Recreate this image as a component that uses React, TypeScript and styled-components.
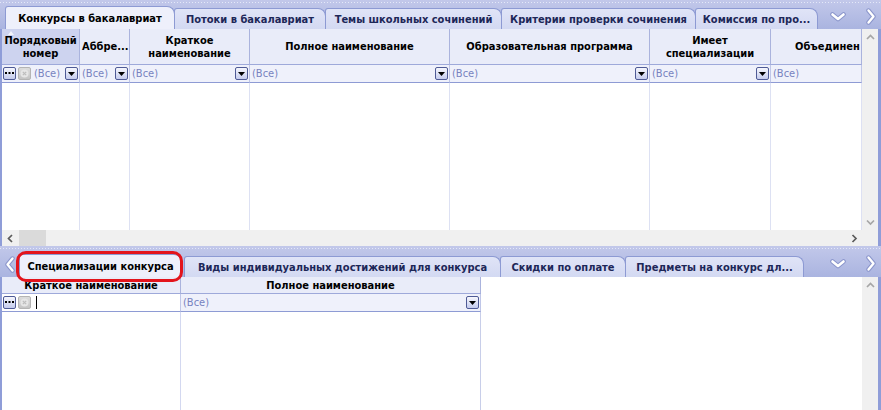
import React from "react";
import styled, { createGlobalStyle } from "styled-components";

const FONT = `"DejaVu Sans Condensed", "DejaVu Sans", "Liberation Sans", sans-serif`;

const GlobalStyle = createGlobalStyle`
  html, body { margin: 0; padding: 0; background: #ffffff; }
  body { font-family: ${FONT}; font-size: 11px; color: #000; }
  * { box-sizing: border-box; }
`;

const Frame = styled.div`
  width: 881px;
  height: 410px;
  display: flex;
  flex-direction: column;
  overflow: hidden;
  background: #fff;
`;

const Panel = styled.section<{ $h: number }>`
  height: ${(p) => p.$h}px;
  flex: none;
  display: flex;
  flex-direction: column;
`;

const TabStrip = styled.div<{ $h: number; $pl: number }>`
  position: relative;
  z-index: 2;
  height: ${(p) => p.$h}px;
  flex: none;
  display: flex;
  align-items: flex-end;
  padding-left: ${(p) => p.$pl}px;
  background:
    repeating-linear-gradient(90deg, #e4e8f8 0 1px, transparent 1px 3px) 0 2px / 100% 1px no-repeat,
    linear-gradient(#c2c8ea, #aab4e0);
`;

const Tab = styled.div<{ $w: number; $active?: boolean; $ring?: boolean; $gap?: number }>`
  position: relative;
  z-index: ${(p) => (p.$active ? 3 : 1)};
  width: ${(p) => p.$w}px;
  height: ${(p) => (p.$active ? 23 : 21)}px;
  flex: none;
  display: flex;
  align-items: center;
  justify-content: center;
  font-weight: bold;
  font-size: 11px;
  white-space: nowrap;
  border: 1px solid #8d9ad3;
  border-bottom: none;
  border-radius: 3px 8px 0 0;
  margin-left: ${(p) => p.$gap ?? 0}px;
  margin-right: -1px;
  background: ${(p) => (p.$active ? "#eef0fb" : "linear-gradient(#e0e4f7, #d3d9f2)")};
  color: ${(p) => (p.$active ? "#000" : "#1d2758")};
  &::after {
    content: "";
    display: ${(p) => (p.$ring ? "block" : "none")};
    position: absolute;
    top: -4px;
    left: -4px;
    right: -2px;
    bottom: -5px;
    border: 3px solid #e3141c;
    border-radius: 10px;
  }
`;

const StripLead = styled.div`
  width: 19px;
  height: 100%;
  flex: none;
  display: flex;
  align-items: center;
  justify-content: center;
  padding-top: 6px;
`;

const StripTools = styled.div`
  margin-left: auto;
  height: 100%;
  display: flex;
  align-items: center;
  gap: 20px;
  padding-right: 5px;
  padding-top: 4px;
`;

const Body = styled.div`
  flex: 1;
  min-height: 0;
  display: flex;
  flex-direction: column;
  border-left: 2px solid #8f9dd8;
  border-right: 3px solid #8f9dd8;
`;

const BodyRow = styled.div<{ $h?: number }>`
  display: flex;
  flex: ${(p) => (p.$h ? "none" : "1")};
  height: ${(p) => (p.$h ? `${p.$h}px` : "auto")};
  min-height: 0;
`;

const GridArea = styled.div`
  flex: 1;
  min-width: 0;
  overflow: hidden;
  background: #fff;
`;

const Table = styled.div<{ $cols: string; $head: number; $width?: number }>`
  display: grid;
  width: ${(p) => (p.$width ? `${p.$width}px` : "100%")};
  height: 100%;
  grid-template-columns: ${(p) => p.$cols};
  grid-template-rows: ${(p) => p.$head}px 18px 1fr;
`;

const HeadCell = styled.div<{ $sorted?: boolean; $align?: "start" | "center"; $pad?: number }>`
  position: relative;
  display: flex;
  align-items: center;
  justify-content: ${(p) => (p.$align === "start" ? "flex-start" : "center")};
  padding: 0 ${(p) => p.$pad ?? 2}px;
  text-align: center;
  font-weight: bold;
  line-height: 13px;
  white-space: pre;
  overflow: hidden;
  color: #000;
  background: ${(p) => (p.$sorted ? "#cdd3ef" : "#e9ecf9")};
  border-right: 1px solid #aab3dd;
  border-bottom: 1px solid #9ea9da;
`;

const SortMark = styled.span`
  position: absolute;
  left: 6px;
  top: 2px;
  width: 0;
  height: 0;
  border-left: 3px solid transparent;
  border-right: 3px solid transparent;
  border-bottom: 4px solid #f4f5fc;
`;

const FilterCell = styled.div<{ $editing?: boolean }>`
  display: flex;
  align-items: center;
  gap: 2px;
  padding: 0 1px;
  overflow: hidden;
  background: ${(p) => (p.$editing ? "#ffffff" : "#eff1fb")};
  border-right: 1px solid #bfc6e8;
  border-bottom: 1px solid #8e9bd4;
`;

const FilterText = styled.span`
  color: #7883c0;
  font-size: 11px;
  white-space: nowrap;
  padding-left: 1px;
`;

const Caret = styled.span`
  width: 1px;
  height: 13px;
  margin-left: 3px;
  background: #000;
`;

const MiniButton = styled.span<{ $kind: "drop" | "dots" | "clear" }>`
  width: 13px;
  height: 13px;
  flex: none;
  display: flex;
  align-items: center;
  justify-content: center;
  border-radius: 2px;
  margin-left: ${(p) => (p.$kind === "drop" ? "auto" : "0")};
  border: 1px solid ${(p) => (p.$kind === "clear" ? "#b4b4b4" : "#4f5b96")};
  background: ${(p) =>
    p.$kind === "clear" ? "linear-gradient(#dcdcdc, #c4c4c4)" : "linear-gradient(#f6f7fd, #c5cced)"};
`;

const DataCell = styled.div<{ $line?: string }>`
  border-right: 1px solid ${(p) => p.$line ?? "#dde1f3"};
`;

const VScroll = styled.div`
  width: 16px;
  flex: none;
  display: flex;
  flex-direction: column;
  justify-content: space-between;
  background: #f0f0f0;
`;

const HScroll = styled.div`
  flex: 1;
  display: flex;
  align-items: center;
  background: #f0f0f0;
`;

const ArrowBox = styled.span`
  width: 16px;
  height: 16px;
  flex: none;
  display: flex;
  align-items: center;
  justify-content: center;
`;

const Thumb = styled.span`
  width: 27px;
  height: 16px;
  flex: none;
  margin-left: 1px;
  background: #dadada;
`;

const Track = styled.span`
  flex: 1;
`;

const Corner = styled.div`
  width: 16px;
  flex: none;
  background: #f0f0f0;
`;

/* ---------- icons ---------- */

const ChevronDownBig = () => (
  <svg width="16" height="10" viewBox="0 0 16 10">
    <path d="M2.5 2.5 L8 7 L13.5 2.5" fill="none" stroke="#8a95cb" strokeWidth="4.6" strokeLinecap="round" strokeLinejoin="round" />
    <path d="M2.5 2.5 L8 7 L13.5 2.5" fill="none" stroke="#ffffff" strokeWidth="2.6" strokeLinecap="round" strokeLinejoin="round" />
  </svg>
);

const ChevronSideBig = ({ dir }: { dir: "left" | "right" }) => {
  const d = dir === "right" ? "M2.5 2.5 L7.5 8.5 L2.5 14.5" : "M7.5 2.5 L2.5 8.5 L7.5 14.5";
  return (
    <svg width="10" height="17" viewBox="0 0 10 17">
      <path d={d} fill="none" stroke="#8a95cb" strokeWidth="4.4" strokeLinecap="round" strokeLinejoin="round" />
      <path d={d} fill="none" stroke="#ffffff" strokeWidth="2.4" strokeLinecap="round" strokeLinejoin="round" />
    </svg>
  );
};

const ScrollArrow = ({ dir, dark }: { dir: "up" | "down" | "left" | "right"; dark?: boolean }) => {
  const paths = {
    up: "M1 5 L4.5 1.5 L8 5",
    down: "M1 1.5 L4.5 5 L8 1.5",
    left: "M5 1 L1.5 4.5 L5 8",
    right: "M1.5 1 L5 4.5 L1.5 8",
  };
  const vertical = dir === "up" || dir === "down";
  return (
    <svg width={vertical ? 9 : 7} height={vertical ? 7 : 9} viewBox={vertical ? "0 0 9 7" : "0 0 7 9"}>
      <path d={paths[dir]} fill="none" stroke={dark ? "#5a5a5a" : "#a6a6a6"} strokeWidth="1.7" />
    </svg>
  );
};

const DropGlyph = () => (
  <svg width="7" height="5" viewBox="0 0 7 5">
    <path d="M0 1 H7 L3.5 5 Z" fill="#000" />
  </svg>
);

const DotsGlyph = () => (
  <svg width="9" height="3" viewBox="0 0 9 3">
    <rect x="0" y="0" width="2" height="2" fill="#000" />
    <rect x="3.5" y="0" width="2" height="2" fill="#000" />
    <rect x="7" y="0" width="2" height="2" fill="#000" />
  </svg>
);

const ClearGlyph = () => (
  <svg width="9" height="9" viewBox="0 0 9 9">
    <circle cx="4.5" cy="4.5" r="4" fill="#e6e6e6" />
    <path d="M2.8 2.8 L6.2 6.2 M6.2 2.8 L2.8 6.2" stroke="#bdbdbd" strokeWidth="1.2" />
  </svg>
);

/* ---------- data ---------- */

type Col = {
  title: string;
  w: number | string;
  sorted?: boolean;
  tools?: boolean;
  editing?: boolean;
  noDrop?: boolean;
  noText?: boolean;
  align?: "start" | "center";
  pad?: number;
  line?: string;
};

const topCols: Col[] = [
  { title: "Порядковый\nномер", w: 78, sorted: true, tools: true, pad: 0 },
  { title: "Аббре...", w: 50, align: "start" },
  { title: "Краткое\nнаименование", w: 120 },
  { title: "Полное наименование", w: 200 },
  { title: "Образовательная программа", w: 200 },
  { title: "Имеет\nспециализации", w: 121 },
  { title: "Объединен", w: "1fr", align: "start", pad: 24, noDrop: true },
];

const bottomCols: Col[] = [
  { title: "Краткое наименование", w: 179, tools: true, editing: true, noText: true, line: "#d3d8f0" },
  { title: "Полное наименование", w: 300, line: "#c8cee9" },
];

const topTabs = [
  { label: "Конкурсы в бакалавриат", w: 170, active: true },
  { label: "Потоки в бакалавриат", w: 152 },
  { label: "Темы школьных сочинений", w: 177 },
  { label: "Критерии проверки сочинения", w: 195 },
  { label: "Комиссия по про...", w: 123 },
];

const bottomTabs = [
  { label: "Специализации конкурса", w: 163, active: true },
  { label: "Виды индивидуальных достижений для конкурса", w: 317, gap: 3 },
  { label: "Скидки по оплате", w: 126 },
  { label: "Предметы на конкурс дл...", w: 179 },
];

const colsTemplate = (cols: Col[]) => cols.map((c) => (typeof c.w === "number" ? `${c.w}px` : c.w)).join(" ");

const Grid = ({ cols, head, width }: { cols: Col[]; head: number; width?: number }) => (
  <Table $cols={colsTemplate(cols)} $head={head} $width={width}>
    {cols.map((c, i) => (
      <HeadCell key={`h${i}`} $sorted={c.sorted} $align={c.align} $pad={c.pad}>
        {c.sorted && <SortMark />}
        {c.title}
      </HeadCell>
    ))}
    {cols.map((c, i) => (
      <FilterCell key={`f${i}`} $editing={c.editing}>
        {c.tools && (
          <>
            <MiniButton $kind="dots">
              <DotsGlyph />
            </MiniButton>
            <MiniButton $kind="clear">
              <ClearGlyph />
            </MiniButton>
          </>
        )}
        {c.editing ? <Caret /> : !c.noText && <FilterText>(Все)</FilterText>}
        {!c.noDrop && !c.editing && (
          <MiniButton $kind="drop">
            <DropGlyph />
          </MiniButton>
        )}
      </FilterCell>
    ))}
    {cols.map((c, i) => (
      <DataCell key={`d${i}`} $line={c.line} />
    ))}
  </Table>
);

export default function App() {
  return (
    <>
      <GlobalStyle />
      <Frame>
        <Panel $h={246}>
          <TabStrip $h={29} $pl={5}>
            {topTabs.map((t) => (
              <Tab key={t.label} $w={t.w} $active={t.active}>
                {t.label}
              </Tab>
            ))}
            <StripTools>
              <ChevronDownBig />
              <ChevronSideBig dir="right" />
            </StripTools>
          </TabStrip>
          <Body>
            <BodyRow>
              <GridArea>
                <Grid cols={topCols} head={36} />
              </GridArea>
              <VScroll>
                <ArrowBox>
                  <ScrollArrow dir="up" />
                </ArrowBox>
                <ArrowBox>
                  <ScrollArrow dir="down" />
                </ArrowBox>
              </VScroll>
            </BodyRow>
            <BodyRow $h={16}>
              <HScroll>
                <ArrowBox>
                  <ScrollArrow dir="left" dark />
                </ArrowBox>
                <Thumb />
                <Track />
                <ArrowBox>
                  <ScrollArrow dir="right" dark />
                </ArrowBox>
              </HScroll>
              <Corner />
            </BodyRow>
          </Body>
        </Panel>
        <Panel $h={164}>
          <TabStrip $h={31} $pl={0}>
            <StripLead>
              <ChevronSideBig dir="left" />
            </StripLead>
            {bottomTabs.map((t) => (
              <Tab key={t.label} $w={t.w} $active={t.active} $ring={t.active} $gap={t.gap}>
                {t.label}
              </Tab>
            ))}
            <StripTools>
              <ChevronDownBig />
              <ChevronSideBig dir="right" />
            </StripTools>
          </TabStrip>
          <Body>
            <BodyRow>
              <GridArea>
                <Grid cols={bottomCols} head={17} width={479} />
              </GridArea>
              <VScroll>
                <ArrowBox>
                  <ScrollArrow dir="up" />
                </ArrowBox>
              </VScroll>
            </BodyRow>
          </Body>
        </Panel>
      </Frame>
    </>
  );
}
